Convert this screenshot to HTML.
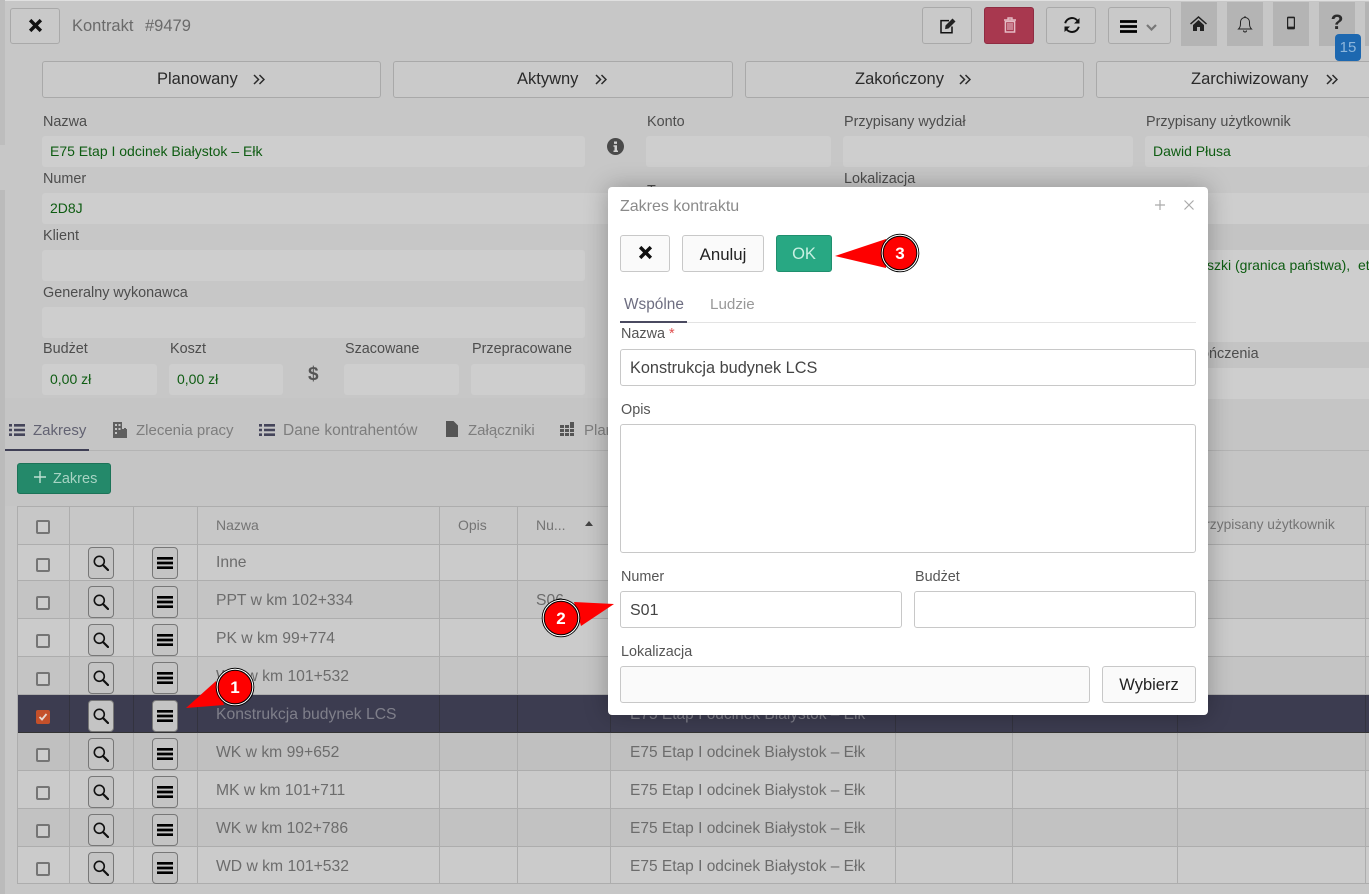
<!DOCTYPE html>
<html lang="pl"><head><meta charset="utf-8"><title>Kontrakt #9479</title>
<style>
html,body{margin:0;padding:0}
body{width:1369px;height:894px;overflow:hidden;position:relative;background:#c7c7c7;font-family:"Liberation Sans",sans-serif;font-size:14.5px;color:#555}
div,span,svg{position:absolute;box-sizing:border-box}
.t{white-space:nowrap;line-height:20px}
.btn{border:1px solid #a9a9a9;border-radius:3px;background:#c9c9c9}
.st{top:61px;height:37px;border:1px solid #a9a9a9;border-radius:3px;background:#cacaca}
.sx{top:69px;white-space:nowrap;color:#2a2a2a;font-size:16.5px;line-height:20px}
.ch{top:74px}
.nv{top:2px;width:36px;height:44px;background:#b4b4b4}
.l{white-space:nowrap;line-height:20px;color:#4d4d4d;font-size:14.4px}
.i{background:#cecece;border-radius:3px;height:31px;color:#0e5c12;line-height:31px;padding-left:8px;font-size:14px;white-space:nowrap;overflow:hidden}
.tab{white-space:nowrap;line-height:20px;font-size:15px;color:#7d7d7d;top:421px}
.r{left:17px;width:1352px;height:38px;border-bottom:1px solid #adadad}
.cb{left:19px;top:15px;width:14px;height:14px;border:2px solid #757575;border-radius:2px;background:#cdcdcd}
.b1,.b2{top:5px;width:26px;height:32px;border:1px solid #777;border-radius:4px;background:#c4c4c4}
.b1{left:71px}.b2{left:135px}
.b1 svg,.b2 svg{left:4px;top:7px}
.n,.c,.m{white-space:nowrap;line-height:40px;top:0;font-size:15.7px;color:#6c6c6c}
.c{font-size:15.5px}
.n{left:199px}.c{left:613px}
.col{top:506px;width:1px;height:377px;background:#adadad}
.dc{top:695px;width:1px;height:38px;background:#33333f}
.hd{white-space:nowrap;top:515px;line-height:20px;font-size:14px;color:#747474}
.mi{border:1px solid #c8c8c8;border-radius:3px;background:#fff}
.ml{white-space:nowrap;line-height:20px;font-size:14.4px;color:#555}
</style></head><body>
<svg width="0" height="0" style="left:0;top:0"><defs>
<symbol id="mag" viewBox="0 0 16 16"><circle cx="6.300" cy="6.300" r="5" fill="none" stroke="#111" stroke-width="1.600"/><path d="M10 10L15 15" stroke="#111" stroke-width="2.200" stroke-linecap="round"/></symbol>
<symbol id="bur" viewBox="0 0 18 18"><path d="M0 2.200h18v3H0zM0 7.500h18v3H0zM0 12.800h18v3H0z" fill="#000"/></symbol>
<symbol id="lst" viewBox="0 0 16 14"><path d="M0 1h3v2.600H0zM5 1h11v2.600H5zM0 5.700h3v2.600H0zM5 5.700h11v2.600H5zM0 10.400h3V13H0zM5 10.400h11V13H5z" fill="#45455a"/></symbol>
<symbol id="dch" viewBox="0 0 12 11"><path d="M1 1l4.500 4.500L1 10M6.500 1L11 5.500 6.500 10" fill="none" stroke="#2a2a2a" stroke-width="1.500"/></symbol>
</defs></svg>

<div style="left:0;top:0;width:1369px;height:1px;background:#e0e0e0"></div>
<div style="left:0;top:0;width:5px;height:145px;background:#bdbdbd"></div>
<div style="left:0;top:190px;width:5px;height:704px;background:#bbb"></div>
<div style="left:0;top:398px;width:1369px;height:108px;background:#c5c5c5"></div>
<div style="left:0;top:398px;width:5px;height:496px;background:#bbb"></div>

<!-- top bar -->
<div class="btn" style="left:10px;top:8px;width:50px;height:36px"><svg width="15" height="15" style="left:17px;top:9px" viewBox="0 0 14 14"><path d="M2 2L12 12M12 2L2 12" stroke="#111" stroke-width="3.200"/></svg></div>
<div class="t" style="left:72px;top:16px;font-size:16.5px;color:#6a6a6a">Kontrakt</div>
<div class="t" style="left:145px;top:16px;font-size:16.5px;color:#6a6a6a">#9479</div>
<div class="btn" style="left:922px;top:7px;width:50px;height:37px"><svg width="18" height="18" style="left:16px;top:9px" viewBox="0 0 18 18"><path d="M13 9.500V15.800H2V3.600h8" fill="none" stroke="#111" stroke-width="1.500"/><path d="M6.500 8.500L13.500 1.500l3 3-7 7-3.400.6z" fill="#222"/></svg></div>
<div class="btn" style="left:984px;top:7px;width:50px;height:37px;background:#a8384f;border-color:#8f2c42"><svg width="14" height="16" style="left:18px;top:9px" viewBox="0 0 14 16"><path d="M1 3h12M5 3V1h4v2" fill="none" stroke="#e5bcc5" stroke-width="1.400"/><path d="M2.400 4.500h9.200V15H2.400z" fill="none" stroke="#e5bcc5" stroke-width="1.500"/><path d="M5 6v7M7 6v7M9 6v7" stroke="#e5bcc5" stroke-width="1.100"/></svg></div>
<div class="btn" style="left:1046px;top:7px;width:50px;height:37px"><svg width="18" height="18" style="left:16px;top:8px" viewBox="0 0 18 18"><path d="M2.200 7.200A7 7 0 0 1 15 5.500M15.800 10.800A7 7 0 0 1 3 12.500" fill="none" stroke="#111" stroke-width="2"/><path d="M16.500 2v5.500h-5.500zM1.500 16v-5.500h5.500z" fill="#111"/></svg></div>
<div class="btn" style="left:1108px;top:7px;width:63px;height:37px"><svg width="17" height="17" style="left:11px;top:10px"><use href="#bur"/></svg><svg width="11" height="7" style="left:37px;top:16px" viewBox="0 0 11 7"><path d="M1 1l4.500 4.500L10 1" fill="none" stroke="#777" stroke-width="2.200"/></svg></div>
<div class="nv" style="left:1181px"><svg width="17" height="15" style="left:9px;top:14px" viewBox="0 0 17 15"><path d="M8.500 0L0 7.500l1 1L8.500 2l7.500 6.500 1-1z" fill="#222"/><path d="M3 9l5.500-5L14 9v6H10v-4H7v4H3z" fill="#222"/></svg></div>
<div class="nv" style="left:1227px"><svg width="16" height="18" style="left:10px;top:13px" viewBox="0 0 16 18"><path d="M1.500 14c2-2 2-3.500 2-7a4.500 4.500 0 0 1 9 0c0 3.500 0 5 2 7z" fill="none" stroke="#222" stroke-width="1"/><path d="M6.500 15.500a1.500 1.500 0 0 0 3 0M8 1v1.500" fill="none" stroke="#222" stroke-width="1"/></svg></div>
<div class="nv" style="left:1273px"><svg width="8" height="14" style="left:14px;top:14px" viewBox="0 0 10 16"><path d="M1.500 0h7A1.500 1.500 0 0 1 10 1.500v13A1.500 1.500 0 0 1 8.500 16h-7A1.500 1.500 0 0 1 0 14.500v-13A1.500 1.500 0 0 1 1.500 0zM1.500 2v10.500h7V2z" fill="#222" fill-rule="evenodd"/></svg></div>
<div class="nv" style="left:1319px"><div style="left:0;width:36px;top:8px;line-height:26px;text-align:center;font-weight:700;font-size:21px;color:#2c2c2c">?</div></div>
<div style="left:1365px;top:2px;width:4px;height:44px;background:#b4b4b4"></div>
<div style="left:1335px;top:34px;width:26px;height:27px;background:#1d68b0;border-radius:4px;color:#8db6dc;font-size:15px;line-height:27px;text-align:center">15</div>

<!-- status -->
<div class="st" style="left:42px;width:339px"></div><div class="sx" style="left:157px">Planowany</div><svg class="ch" width="12" height="11" style="left:253px"><use href="#dch"/></svg>
<div class="st" style="left:393px;width:340px"></div><div class="sx" style="left:517px">Aktywny</div><svg class="ch" width="12" height="11" style="left:595px"><use href="#dch"/></svg>
<div class="st" style="left:745px;width:339px"></div><div class="sx" style="left:855px">Zakończony</div><svg class="ch" width="12" height="11" style="left:959px"><use href="#dch"/></svg>
<div class="st" style="left:1096px;width:287px"></div><div class="sx" style="left:1191px">Zarchiwizowany</div><svg class="ch" width="12" height="11" style="left:1326px"><use href="#dch"/></svg>

<!-- form -->
<div class="l" style="left:43px;top:112px">Nazwa</div>
<div class="i" style="left:42px;top:136px;width:543px">E75 Etap I odcinek Białystok – Ełk</div>
<div class="l" style="left:43px;top:169px">Numer</div>
<div class="i" style="left:42px;top:193px;width:570px">2D8J</div>
<div class="l" style="left:43px;top:226px">Klient</div>
<div class="i" style="left:42px;top:250px;width:543px"></div>
<div class="l" style="left:43px;top:283px">Generalny wykonawca</div>
<div class="i" style="left:42px;top:307px;width:543px"></div>
<div class="l" style="left:43px;top:339px">Budżet</div>
<div class="i" style="left:42px;top:364px;width:115px">0,00 zł</div>
<div class="l" style="left:170px;top:339px">Koszt</div>
<div class="i" style="left:169px;top:364px;width:114px">0,00 zł</div>
<div class="t" style="left:308px;top:365px;font-weight:700;font-size:19px;color:#555">$</div>
<div class="l" style="left:345px;top:339px">Szacowane</div>
<div class="i" style="left:344px;top:364px;width:115px"></div>
<div class="l" style="left:472px;top:339px">Przepracowane</div>
<div class="i" style="left:471px;top:364px;width:114px"></div>
<svg width="17" height="17" style="left:607px;top:138px" viewBox="0 0 17 17"><circle cx="8.500" cy="8.500" r="8.500" fill="#4a4a4a"/><path d="M7 3.500h3v2.400H7zM6.500 7.200h3.500v5.300h1v1.500H6.500v-1.500h1V8.700h-1z" fill="#d0d0d0"/></svg>
<div class="l" style="left:647px;top:112px">Konto</div>
<div class="i" style="left:646px;top:136px;width:185px"></div>
<div class="l" style="left:844px;top:112px">Przypisany wydział</div>
<div class="i" style="left:843px;top:136px;width:290px"></div>
<div class="l" style="left:1146px;top:112px">Przypisany użytkownik</div>
<div class="i" style="left:1145px;top:136px;width:224px">Dawid Płusa</div>
<div class="l" style="left:844px;top:169px">Lokalizacja</div>
<div class="l" style="left:647px;top:181px">Typ</div>
<div style="left:1208px;top:193px;width:161px;height:31px;background:#cecece"></div>
<div style="left:1208px;top:224px;width:161px;height:26px;background:#c4c4c4"></div>
<div style="left:1208px;top:250px;width:161px;height:92px;background:#cecece"></div>
<div class="t" style="left:1207px;top:255px;color:#0e5c12;font-size:14px;width:162px;overflow:hidden">szki (granica państwa), &nbsp;etap</div>
<div style="left:1180px;top:342px;width:189px;height:26px;background:#c4c4c4"></div>
<div class="l" style="left:1201px;top:344px;width:80px;overflow:hidden">ończenia</div>
<div style="left:1145px;top:368px;width:224px;height:31px;background:#cecece"></div>

<!-- tabs -->
<div style="left:5px;top:450px;width:1364px;height:1px;background:#b4b4b4"></div>
<div style="left:5px;top:449px;width:84px;height:2px;background:#3f3f55"></div>
<svg width="16" height="14" style="left:9px;top:423px"><use href="#lst"/></svg>
<div class="tab" style="left:33px;color:#626272">Zakresy</div>
<svg width="16" height="16" style="left:112px;top:422px" viewBox="0 0 16 16"><path d="M1 0h9v7h2v-1h2v1h-1 2v9H1z" fill="#5f5f5f"/><path d="M3 2h2v2H3zM6.500 2h2v2h-2zM3 6h2v2H3zM6.500 6h2v2h-2zM3 10h2v2H3z" fill="#c5c5c5"/></svg>
<div class="tab" style="left:136px">Zlecenia pracy</div>
<svg width="16" height="14" style="left:259px;top:423px"><use href="#lst"/></svg>
<div class="tab" style="left:283px;font-size:15.5px">Dane kontrahentów</div>
<svg width="12" height="16" style="left:446px;top:421px" viewBox="0 0 12 16"><path d="M0 0h7.500L12 4.500V16H0z" fill="#555"/></svg>
<div class="tab" style="left:468px">Załączniki</div>
<svg width="15" height="15" style="left:560px;top:422px" viewBox="0 0 15 15"><path d="M0 3h4v3H0zM5 3h4v3H5zM10 0h4v6h-4zM0 7h4v3H0zM5 7h4v3H5zM10 7h4v3h-4zM0 11h4v3H0zM5 11h4v3H5zM10 11h4v3h-4z" fill="#555"/></svg>
<div class="tab" style="left:584px;width:24px;overflow:hidden">Plan</div>
<div style="left:17px;top:463px;width:94px;height:31px;background:#24896a;border:1px solid #1c7358;border-radius:3px"><svg width="12" height="12" style="left:16px;top:7px" viewBox="0 0 12 12"><path d="M6 0v12M0 6h12" stroke="#bfe0d3" stroke-width="1.400"/></svg><div class="t" style="left:35px;top:5px;color:#a8d4c4;font-size:14.5px">Zakres</div></div>

<!-- table -->
<div style="left:17px;top:506px;width:1352px;height:1px;background:#adadad"></div>
<div class="r" style="top:507px;height:38px"><div class="cb" style="top:13px"></div></div>
<div class="hd" style="left:216px">Nazwa</div>
<div class="hd" style="left:458px">Opis</div>
<div class="hd" style="left:536px">Nu...</div>
<svg width="8" height="5" style="left:585px;top:521px"><path d="M0 5L4 0l4 5z" fill="#444"/></svg>
<div class="hd" style="left:1196px;font-size:13.8px">Przypisany użytkownik</div>

<div class="r" style="top:545px;height:36px;background:#cbcbcb"><div class="cb" style="top:13px"></div><div class="n" style="line-height:35px">Inne</div></div>
<div class="b1" style="left:88px;top:547px"><svg width="16" height="16"><use href="#mag"/></svg></div>
<div class="b2" style="left:152px;top:547px"><svg width="16" height="16"><use href="#bur"/></svg></div>

<div class="r" style="top:581px;background:#c4c4c4"><div class="cb"></div><div class="b1"><svg width="16" height="16"><use href="#mag"/></svg></div><div class="b2"><svg width="16" height="16"><use href="#bur"/></svg></div><div class="n">PPT w km 102+334</div><div class="m" style="left:519px">S06</div></div>
<div class="r" style="top:619px;background:#cbcbcb"><div class="cb"></div><div class="b1"><svg width="16" height="16"><use href="#mag"/></svg></div><div class="b2"><svg width="16" height="16"><use href="#bur"/></svg></div><div class="n">PK w km 99+774</div></div>
<div class="r" style="top:657px;background:#c4c4c4"><div class="cb"></div><div class="b1"><svg width="16" height="16"><use href="#mag"/></svg></div><div class="b2"><svg width="16" height="16"><use href="#bur"/></svg></div><div class="n">WD w km 101+532</div></div>
<div class="r" style="top:695px;background:#3c3c50;border-color:#333"><div class="cb" style="background:#c4502a;border-color:#c4502a"><svg width="10" height="10" style="left:0;top:0" viewBox="0 0 10 10"><path d="M1.500 5l2.500 2.500L8.500 2" fill="none" stroke="#e8d8d0" stroke-width="1.800"/></svg></div><div class="b1"><svg width="16" height="16"><use href="#mag"/></svg></div><div class="b2"><svg width="16" height="16"><use href="#bur"/></svg></div><div class="n" style="color:#7f7f8a">Konstrukcja budynek LCS</div><div class="c" style="color:#7f7f8a">E75 Etap I odcinek Białystok – Ełk</div></div>
<div class="r" style="top:733px;background:#c0c0c0"><div class="cb"></div><div class="b1"><svg width="16" height="16"><use href="#mag"/></svg></div><div class="b2"><svg width="16" height="16"><use href="#bur"/></svg></div><div class="n">WK w km 99+652</div><div class="c">E75 Etap I odcinek Białystok – Ełk</div></div>
<div class="r" style="top:771px;background:#cacaca"><div class="cb"></div><div class="b1"><svg width="16" height="16"><use href="#mag"/></svg></div><div class="b2"><svg width="16" height="16"><use href="#bur"/></svg></div><div class="n">MK w km 101+711</div><div class="c">E75 Etap I odcinek Białystok – Ełk</div></div>
<div class="r" style="top:809px;background:#c2c2c2"><div class="cb"></div><div class="b1"><svg width="16" height="16"><use href="#mag"/></svg></div><div class="b2"><svg width="16" height="16"><use href="#bur"/></svg></div><div class="n">WK w km 102+786</div><div class="c">E75 Etap I odcinek Białystok – Ełk</div></div>
<div class="r" style="top:847px;height:37px;background:#cbcbcb"><div class="cb"></div><div class="b1"><svg width="16" height="16"><use href="#mag"/></svg></div><div class="b2"><svg width="16" height="16"><use href="#bur"/></svg></div><div class="n">WD w km 101+532</div><div class="c">E75 Etap I odcinek Białystok – Ełk</div></div>

<div class="col" style="left:17px"></div>
<div class="col" style="left:69px"></div>
<div class="col" style="left:133px"></div>
<div class="col" style="left:197px"></div>
<div class="col" style="left:439px"></div>
<div class="col" style="left:517px"></div>
<div class="col" style="left:610px"></div>
<div class="col" style="left:895px"></div>
<div class="col" style="left:1012px"></div>
<div class="col" style="left:1177px"></div>
<div class="col" style="left:1365px"></div>
<div class="dc" style="left:69px"></div>
<div class="dc" style="left:133px"></div>
<div class="dc" style="left:197px"></div>
<div class="dc" style="left:439px"></div>
<div class="dc" style="left:517px"></div>
<div class="dc" style="left:610px"></div>
<div class="dc" style="left:895px"></div>
<div class="dc" style="left:1012px"></div>
<div class="dc" style="left:1177px"></div>
<div class="dc" style="left:1365px"></div>

<!-- modal -->
<div style="left:608px;top:187px;width:600px;height:528px;background:#fff;border-radius:4px;box-shadow:0 0 24px rgba(0,0,0,.28)"></div>
<div class="t" style="left:620px;top:197px;font-size:16px;color:#8a8a8a">Zakres kontraktu</div>
<svg width="12" height="12" style="left:1154px;top:199px" viewBox="0 0 12 12"><path d="M6 1v10M1 6h10" stroke="#aaa" stroke-width="1.200"/></svg>
<svg width="12" height="12" style="left:1183px;top:199px" viewBox="0 0 12 12"><path d="M1.500 1.500l9 9M10.500 1.500l-9 9" stroke="#aaa" stroke-width="1.200"/></svg>
<div class="mi" style="left:620px;top:235px;width:50px;height:37px;background:#fafafa"><svg width="15" height="15" style="left:17px;top:9px" viewBox="0 0 14 14"><path d="M2 2L12 12M12 2L2 12" stroke="#111" stroke-width="3.200"/></svg></div>
<div class="mi" style="left:682px;top:235px;width:82px;height:37px;background:#fafafa;color:#222;font-size:16.8px;line-height:37px;text-align:center">Anuluj</div>
<div style="left:776px;top:235px;width:56px;height:37px;background:#28a883;border:1px solid #1f8f6e;border-radius:3px;color:#c8f0e2;font-size:16.5px;line-height:37px;text-align:center">OK</div>
<div class="t" style="left:624px;top:295px;font-size:15.4px;color:#6d6d80">Wspólne</div>
<div class="t" style="left:710px;top:295px;font-size:15.2px;color:#999">Ludzie</div>
<div style="left:620px;top:322px;width:576px;height:1px;background:#e3e3e3"></div>
<div style="left:620px;top:321px;width:67px;height:2px;background:#4a4a60"></div>
<div class="ml" style="left:621px;top:324px">Nazwa <span style="position:static;color:#e05050">*</span></div>
<div class="mi" style="left:620px;top:349px;width:576px;height:37px;font-size:16.3px;line-height:37px;padding-left:9px;color:#444">Konstrukcja budynek LCS</div>
<div class="ml" style="left:621px;top:400px">Opis</div>
<div class="mi" style="left:620px;top:424px;width:576px;height:129px"></div>
<div class="ml" style="left:621px;top:567px">Numer</div>
<div class="ml" style="left:915px;top:567px">Budżet</div>
<div class="mi" style="left:620px;top:591px;width:282px;height:37px;font-size:16px;line-height:37px;padding-left:9px;color:#444">S01</div>
<div class="mi" style="left:914px;top:591px;width:282px;height:37px"></div>
<div class="ml" style="left:621px;top:642px">Lokalizacja</div>
<div class="mi" style="left:620px;top:666px;width:470px;height:37px;background:#fafafa"></div>
<div class="mi" style="left:1102px;top:666px;width:94px;height:37px;background:#fafafa;color:#222;font-size:16.5px;line-height:37px;text-align:center">Wybierz</div>

<!-- annotations -->
<svg width="1369" height="894" style="left:0;top:0" viewBox="0 0 1369 894">
<path d="M186 708L216 681L224 705z" fill="#fe0000"/>
<path d="M614 604L574 602L581 626z" fill="#fe0000"/>
<path d="M835 256L886 239L886 268z" fill="#fe0000"/>
<g fill="none" stroke="#000" stroke-width="1"><circle cx="235" cy="687" r="18.800"/><circle cx="561" cy="618" r="18.800"/><circle cx="900" cy="253" r="18.800"/></g>
<g fill="none" stroke="#fff" stroke-width="1"><circle cx="235" cy="687" r="17.800"/><circle cx="561" cy="618" r="17.800"/><circle cx="900" cy="253" r="17.800"/></g>
<g fill="#fe0000" stroke="#000" stroke-width="1"><circle cx="235" cy="687" r="16.800"/><circle cx="561" cy="618" r="16.800"/><circle cx="900" cy="253" r="16.800"/></g>
<g fill="#fff" font-family="Liberation Sans" font-weight="700" font-size="17" text-anchor="middle"><text x="235" y="693">1</text><text x="561" y="624">2</text><text x="900" y="259">3</text></g>
</svg>
</body></html>
